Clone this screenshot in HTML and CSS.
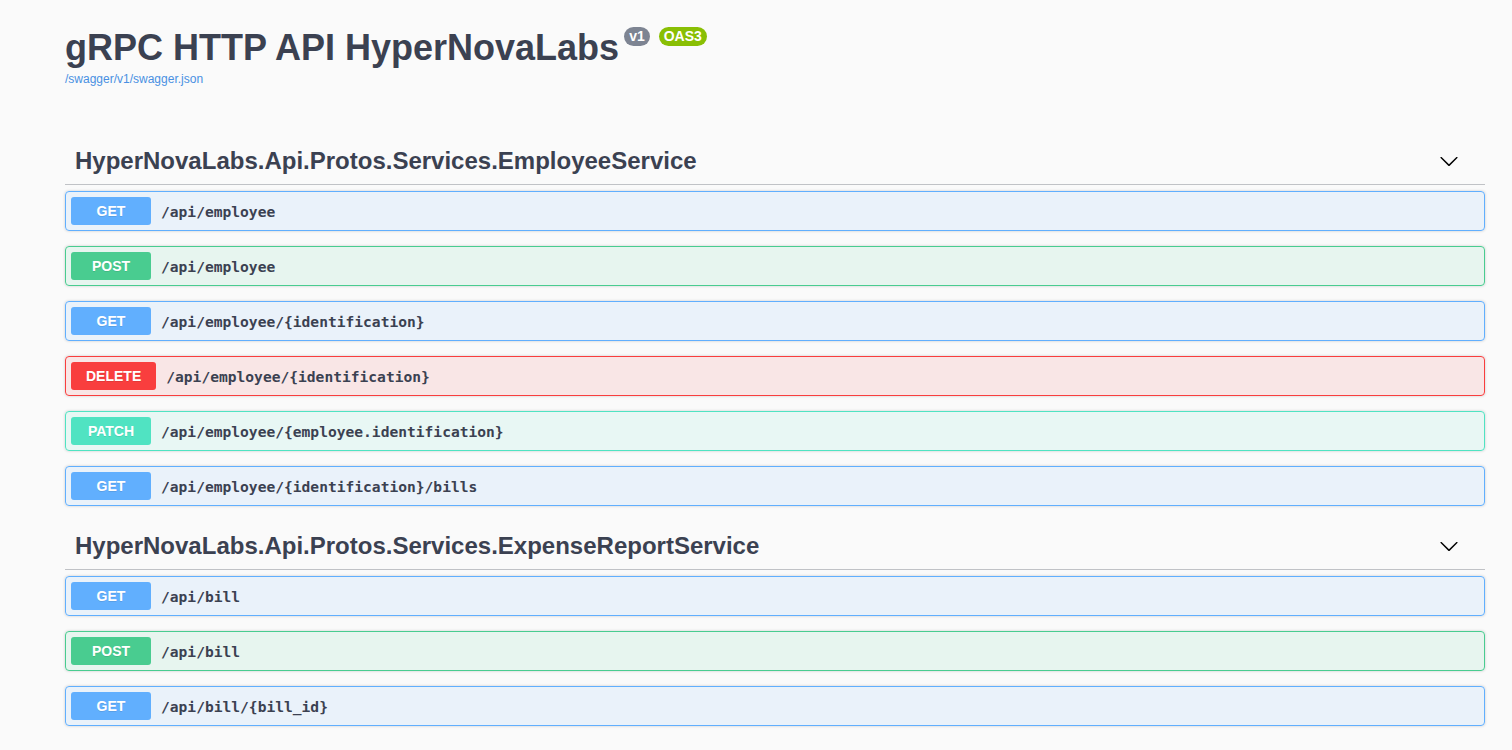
FILE: index.html
```html
<!DOCTYPE html>
<html lang="en">
<head>
<meta charset="utf-8">
<title>Swagger UI</title>
<link rel="stylesheet" href="styles.css">
</head>
<body>
<div class="wrapper">
  <div class="info">
    <h2 class="title">gRPC HTTP API HyperNovaLabs<span class="badge badge-version">v1</span><span class="badge badge-oas">OAS3</span></h2>
    <a class="link" href="#">/swagger/v1/swagger.json</a>
  </div>

  <section class="tag-section">
    <h3 class="tag">
      <span class="tag-name">HyperNovaLabs.Api.Protos.Services.EmployeeService</span>
      <svg class="arrow" width="20" height="20" viewBox="0 0 20 20"><path d="M17.418 6.109c.272-.268.709-.268.979 0s.271.701 0 .969l-7.908 7.83c-.27.268-.707.268-.979 0l-7.908-7.83c-.27-.268-.27-.701 0-.969.271-.268.709-.268.979 0L10 13.25l7.418-7.141z"/></svg>
    </h3>
    <div class="op op-get"><span class="method">GET</span><span class="path">/api/employee</span></div>
    <div class="op op-post"><span class="method">POST</span><span class="path">/api/employee</span></div>
    <div class="op op-get"><span class="method">GET</span><span class="path">/api/employee/{identification}</span></div>
    <div class="op op-delete"><span class="method">DELETE</span><span class="path">/api/employee/{identification}</span></div>
    <div class="op op-patch"><span class="method">PATCH</span><span class="path">/api/employee/{employee.identification}</span></div>
    <div class="op op-get"><span class="method">GET</span><span class="path">/api/employee/{identification}/bills</span></div>
  </section>

  <section class="tag-section">
    <h3 class="tag">
      <span class="tag-name">HyperNovaLabs.Api.Protos.Services.ExpenseReportService</span>
      <svg class="arrow" width="20" height="20" viewBox="0 0 20 20"><path d="M17.418 6.109c.272-.268.709-.268.979 0s.271.701 0 .969l-7.908 7.83c-.27.268-.707.268-.979 0l-7.908-7.83c-.27-.268-.27-.701 0-.969.271-.268.709-.268.979 0L10 13.25l7.418-7.141z"/></svg>
    </h3>
    <div class="op op-get"><span class="method">GET</span><span class="path">/api/bill</span></div>
    <div class="op op-post"><span class="method">POST</span><span class="path">/api/bill</span></div>
    <div class="op op-get"><span class="method">GET</span><span class="path">/api/bill/{bill_id}</span></div>
  </section>
</div>
</body>
</html>
```

FILE: styles.css
```css
html, body {
  margin: 0;
  padding: 0;
  background: #fafafa;
}

body {
  font-family: "Liberation Sans", Arial, sans-serif;
  color: #3b4151;
}

.wrapper {
  padding: 0 27px 0 65px;
}

.info {
  padding-top: 27px;
  margin-bottom: 49px;
  display: flex;
  flex-direction: column;
  align-items: flex-start;
}

.title {
  margin: 0;
  font-size: 36px;
  font-weight: 700;
  line-height: normal;
  color: #3b4151;
}

.badge {
  display: inline-block;
  vertical-align: top;
  margin-top: 0;
  font-size: 14px;
  line-height: 17px;
  font-weight: 700;
  color: #fff;
  padding: 1px 5px;
  border-radius: 57px;
}

.badge-version {
  background: #7d8492;
  margin-left: 5px;
}

.badge-oas {
  background: #89bf04;
  margin-left: 9px;
}

.link {
  margin-top: 3px;
  font-size: 12px;
  line-height: 14px;
  color: #4990e2;
  text-decoration: none;
}

.tag-section {
  display: flex;
  flex-direction: column;
}

.tag-section + .tag-section .tag {
  padding-top: 11px;
}

.tag {
  margin: 0 0 6px;
  padding: 12px 20px 9px 10px;
  display: flex;
  align-items: center;
  justify-content: space-between;
  font-size: 24px;
  line-height: 28px;
  font-weight: 700;
  color: #3b4151;
  border-bottom: 1px solid rgba(59, 65, 81, 0.3);
}

.arrow {
  margin-right: 6px;
  fill: #000;
  flex: none;
}

.op {
  display: flex;
  align-items: center;
  padding: 5px;
  margin-bottom: 15px;
  border: 1px solid;
  border-radius: 4px;
  box-shadow: 0 0 3px rgba(0, 0, 0, 0.19);
}

.method {
  min-width: 80px;
  box-sizing: border-box;
  padding: 6px 15px;
  font-size: 14px;
  line-height: 16px;
  font-weight: 700;
  text-align: center;
  color: #fff;
  border-radius: 3px;
  text-shadow: 0 1px 0 rgba(0, 0, 0, 0.1);
}

.path {
  padding: 0 10px;
  font-family: "DejaVu Sans Mono", monospace;
  font-size: 14.6px;
  font-weight: 700;
  color: #3b4151;
}

.op-get {
  border-color: #61affe;
  background: rgba(97, 175, 254, 0.1);
}
.op-get .method { background: #61affe; }

.op-post {
  border-color: #49cc90;
  background: rgba(73, 204, 144, 0.1);
}
.op-post .method { background: #49cc90; }

.op-delete {
  border-color: #f93e3e;
  background: rgba(249, 62, 62, 0.1);
}
.op-delete .method { background: #f93e3e; }

.op-patch {
  border-color: #50e3c2;
  background: rgba(80, 227, 194, 0.1);
}
.op-patch .method { background: #50e3c2; }
```
